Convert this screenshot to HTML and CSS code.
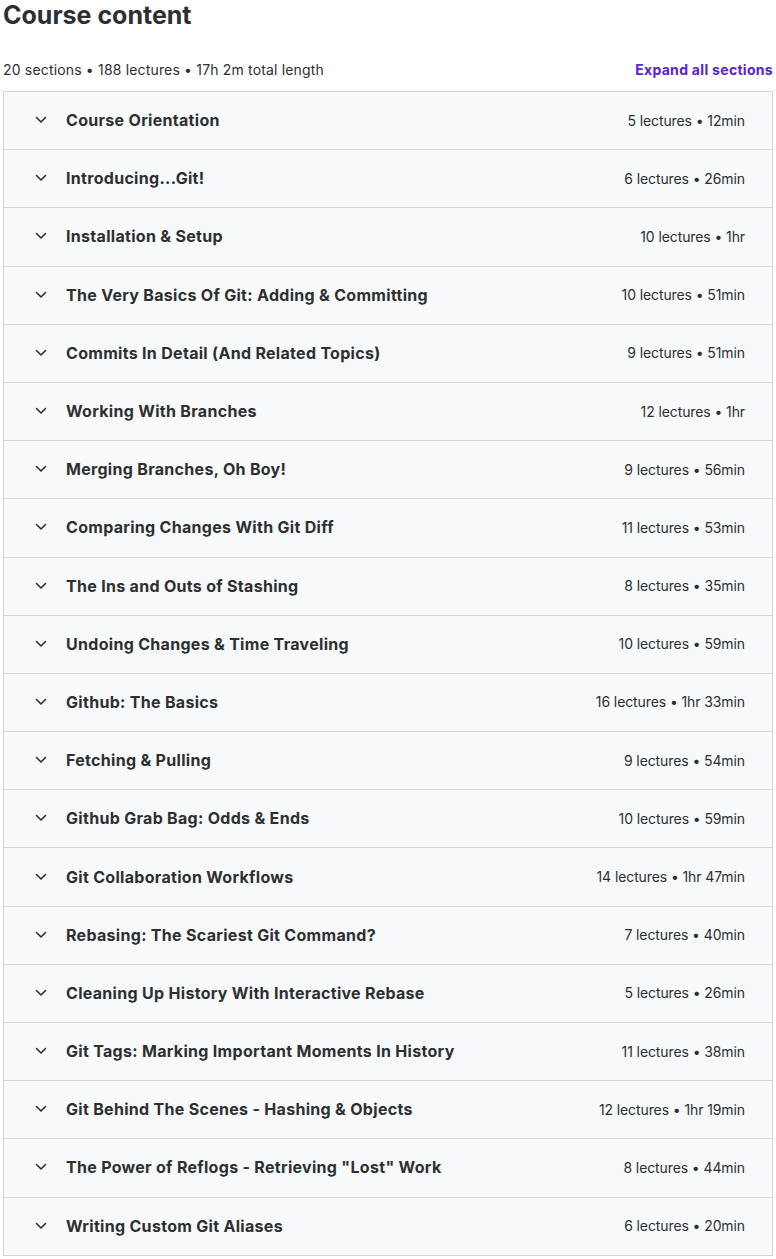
FILE: index.html
```html
<!DOCTYPE html>
<html lang="en">
<head>
<meta charset="utf-8">
<title>Course content</title>
<link rel="stylesheet" href="styles.css">
</head>
<body>
<div class="page">
  <h2 class="title">Course content</h2>
  <div class="summary">
    <span class="stats">20 sections • 188 lectures • 17h 2m total length</span>
    <button class="expand">Expand all sections</button>
  </div>
  <div class="sections">
    <div class="row"><svg class="chev" viewBox="0 0 24 24"><path d="M7.5 9.5l4.5 4.5 4.5-4.5"/></svg><span class="name">Course Orientation</span><span class="meta">5 lectures • 12min</span></div>
    <div class="row"><svg class="chev" viewBox="0 0 24 24"><path d="M7.5 9.5l4.5 4.5 4.5-4.5"/></svg><span class="name">Introducing...Git!</span><span class="meta">6 lectures • 26min</span></div>
    <div class="row"><svg class="chev" viewBox="0 0 24 24"><path d="M7.5 9.5l4.5 4.5 4.5-4.5"/></svg><span class="name">Installation &amp; Setup</span><span class="meta">10 lectures • 1hr</span></div>
    <div class="row"><svg class="chev" viewBox="0 0 24 24"><path d="M7.5 9.5l4.5 4.5 4.5-4.5"/></svg><span class="name">The Very Basics Of Git: Adding &amp; Committing</span><span class="meta">10 lectures • 51min</span></div>
    <div class="row"><svg class="chev" viewBox="0 0 24 24"><path d="M7.5 9.5l4.5 4.5 4.5-4.5"/></svg><span class="name">Commits In Detail (And Related Topics)</span><span class="meta">9 lectures • 51min</span></div>
    <div class="row"><svg class="chev" viewBox="0 0 24 24"><path d="M7.5 9.5l4.5 4.5 4.5-4.5"/></svg><span class="name">Working With Branches</span><span class="meta">12 lectures • 1hr</span></div>
    <div class="row"><svg class="chev" viewBox="0 0 24 24"><path d="M7.5 9.5l4.5 4.5 4.5-4.5"/></svg><span class="name">Merging Branches, Oh Boy!</span><span class="meta">9 lectures • 56min</span></div>
    <div class="row"><svg class="chev" viewBox="0 0 24 24"><path d="M7.5 9.5l4.5 4.5 4.5-4.5"/></svg><span class="name">Comparing Changes With Git Diff</span><span class="meta">11 lectures • 53min</span></div>
    <div class="row"><svg class="chev" viewBox="0 0 24 24"><path d="M7.5 9.5l4.5 4.5 4.5-4.5"/></svg><span class="name">The Ins and Outs of Stashing</span><span class="meta">8 lectures • 35min</span></div>
    <div class="row"><svg class="chev" viewBox="0 0 24 24"><path d="M7.5 9.5l4.5 4.5 4.5-4.5"/></svg><span class="name">Undoing Changes &amp; Time Traveling</span><span class="meta">10 lectures • 59min</span></div>
    <div class="row"><svg class="chev" viewBox="0 0 24 24"><path d="M7.5 9.5l4.5 4.5 4.5-4.5"/></svg><span class="name">Github: The Basics</span><span class="meta">16 lectures • 1hr 33min</span></div>
    <div class="row"><svg class="chev" viewBox="0 0 24 24"><path d="M7.5 9.5l4.5 4.5 4.5-4.5"/></svg><span class="name">Fetching &amp; Pulling</span><span class="meta">9 lectures • 54min</span></div>
    <div class="row"><svg class="chev" viewBox="0 0 24 24"><path d="M7.5 9.5l4.5 4.5 4.5-4.5"/></svg><span class="name">Github Grab Bag: Odds &amp; Ends</span><span class="meta">10 lectures • 59min</span></div>
    <div class="row"><svg class="chev" viewBox="0 0 24 24"><path d="M7.5 9.5l4.5 4.5 4.5-4.5"/></svg><span class="name">Git Collaboration Workflows</span><span class="meta">14 lectures • 1hr 47min</span></div>
    <div class="row"><svg class="chev" viewBox="0 0 24 24"><path d="M7.5 9.5l4.5 4.5 4.5-4.5"/></svg><span class="name">Rebasing: The Scariest Git Command?</span><span class="meta">7 lectures • 40min</span></div>
    <div class="row"><svg class="chev" viewBox="0 0 24 24"><path d="M7.5 9.5l4.5 4.5 4.5-4.5"/></svg><span class="name">Cleaning Up History With Interactive Rebase</span><span class="meta">5 lectures • 26min</span></div>
    <div class="row"><svg class="chev" viewBox="0 0 24 24"><path d="M7.5 9.5l4.5 4.5 4.5-4.5"/></svg><span class="name">Git Tags: Marking Important Moments In History</span><span class="meta">11 lectures • 38min</span></div>
    <div class="row"><svg class="chev" viewBox="0 0 24 24"><path d="M7.5 9.5l4.5 4.5 4.5-4.5"/></svg><span class="name">Git Behind The Scenes - Hashing &amp; Objects</span><span class="meta">12 lectures • 1hr 19min</span></div>
    <div class="row"><svg class="chev" viewBox="0 0 24 24"><path d="M7.5 9.5l4.5 4.5 4.5-4.5"/></svg><span class="name">The Power of Reflogs - Retrieving "Lost" Work</span><span class="meta">8 lectures • 44min</span></div>
    <div class="row"><svg class="chev" viewBox="0 0 24 24"><path d="M7.5 9.5l4.5 4.5 4.5-4.5"/></svg><span class="name">Writing Custom Git Aliases</span><span class="meta">6 lectures • 20min</span></div>
  </div>
</div>
</body>
</html>
```
FILE: styles.css
```css
* { box-sizing: border-box; }
body {
  margin: 0;
  background: #fff;
  color: #2d2f31;
  font-family: Inter, "Liberation Sans", sans-serif;
}
.page {
  padding: 0 3px;
}
.title {
  margin: 0;
  padding-top: 1px;
  font-size: 25px;
  line-height: 29px;
  font-weight: 700;
  letter-spacing: 0;
}
.summary {
  display: flex;
  justify-content: space-between;
  align-items: center;
  margin-top: 28px;
  height: 22px;
  margin-bottom: 11px;
}
.stats {
  font-size: 14px;
  letter-spacing: 0.17px;
}
.expand {
  border: 0;
  background: none;
  padding: 0;
  font-family: inherit;
  font-size: 14px;
  font-weight: 700;
  letter-spacing: 0.3px;
  color: #5624d0;
  cursor: pointer;
}
.sections {
  border: 1px solid #d1d7dc;
  border-top: 0;
}
.row {
  display: flex;
  align-items: center;
  height: 58.2px;
  border-top: 1px solid #d1d7dc;
  background: #f7f9fa;
  padding: 0 27px 1px 25px;
}
.chev {
  width: 24px;
  height: 24px;
  flex: none;
  fill: none;
  stroke: #2d2f31;
  stroke-width: 1.6;
  stroke-linecap: round;
  stroke-linejoin: round;
  margin-right: 13px;
}
.name {
  flex: 1;
  font-size: 16px;
  font-weight: 700;
  letter-spacing: 0.3px;
}
.meta {
  font-size: 14px;
  letter-spacing: -0.1px;
}
```
